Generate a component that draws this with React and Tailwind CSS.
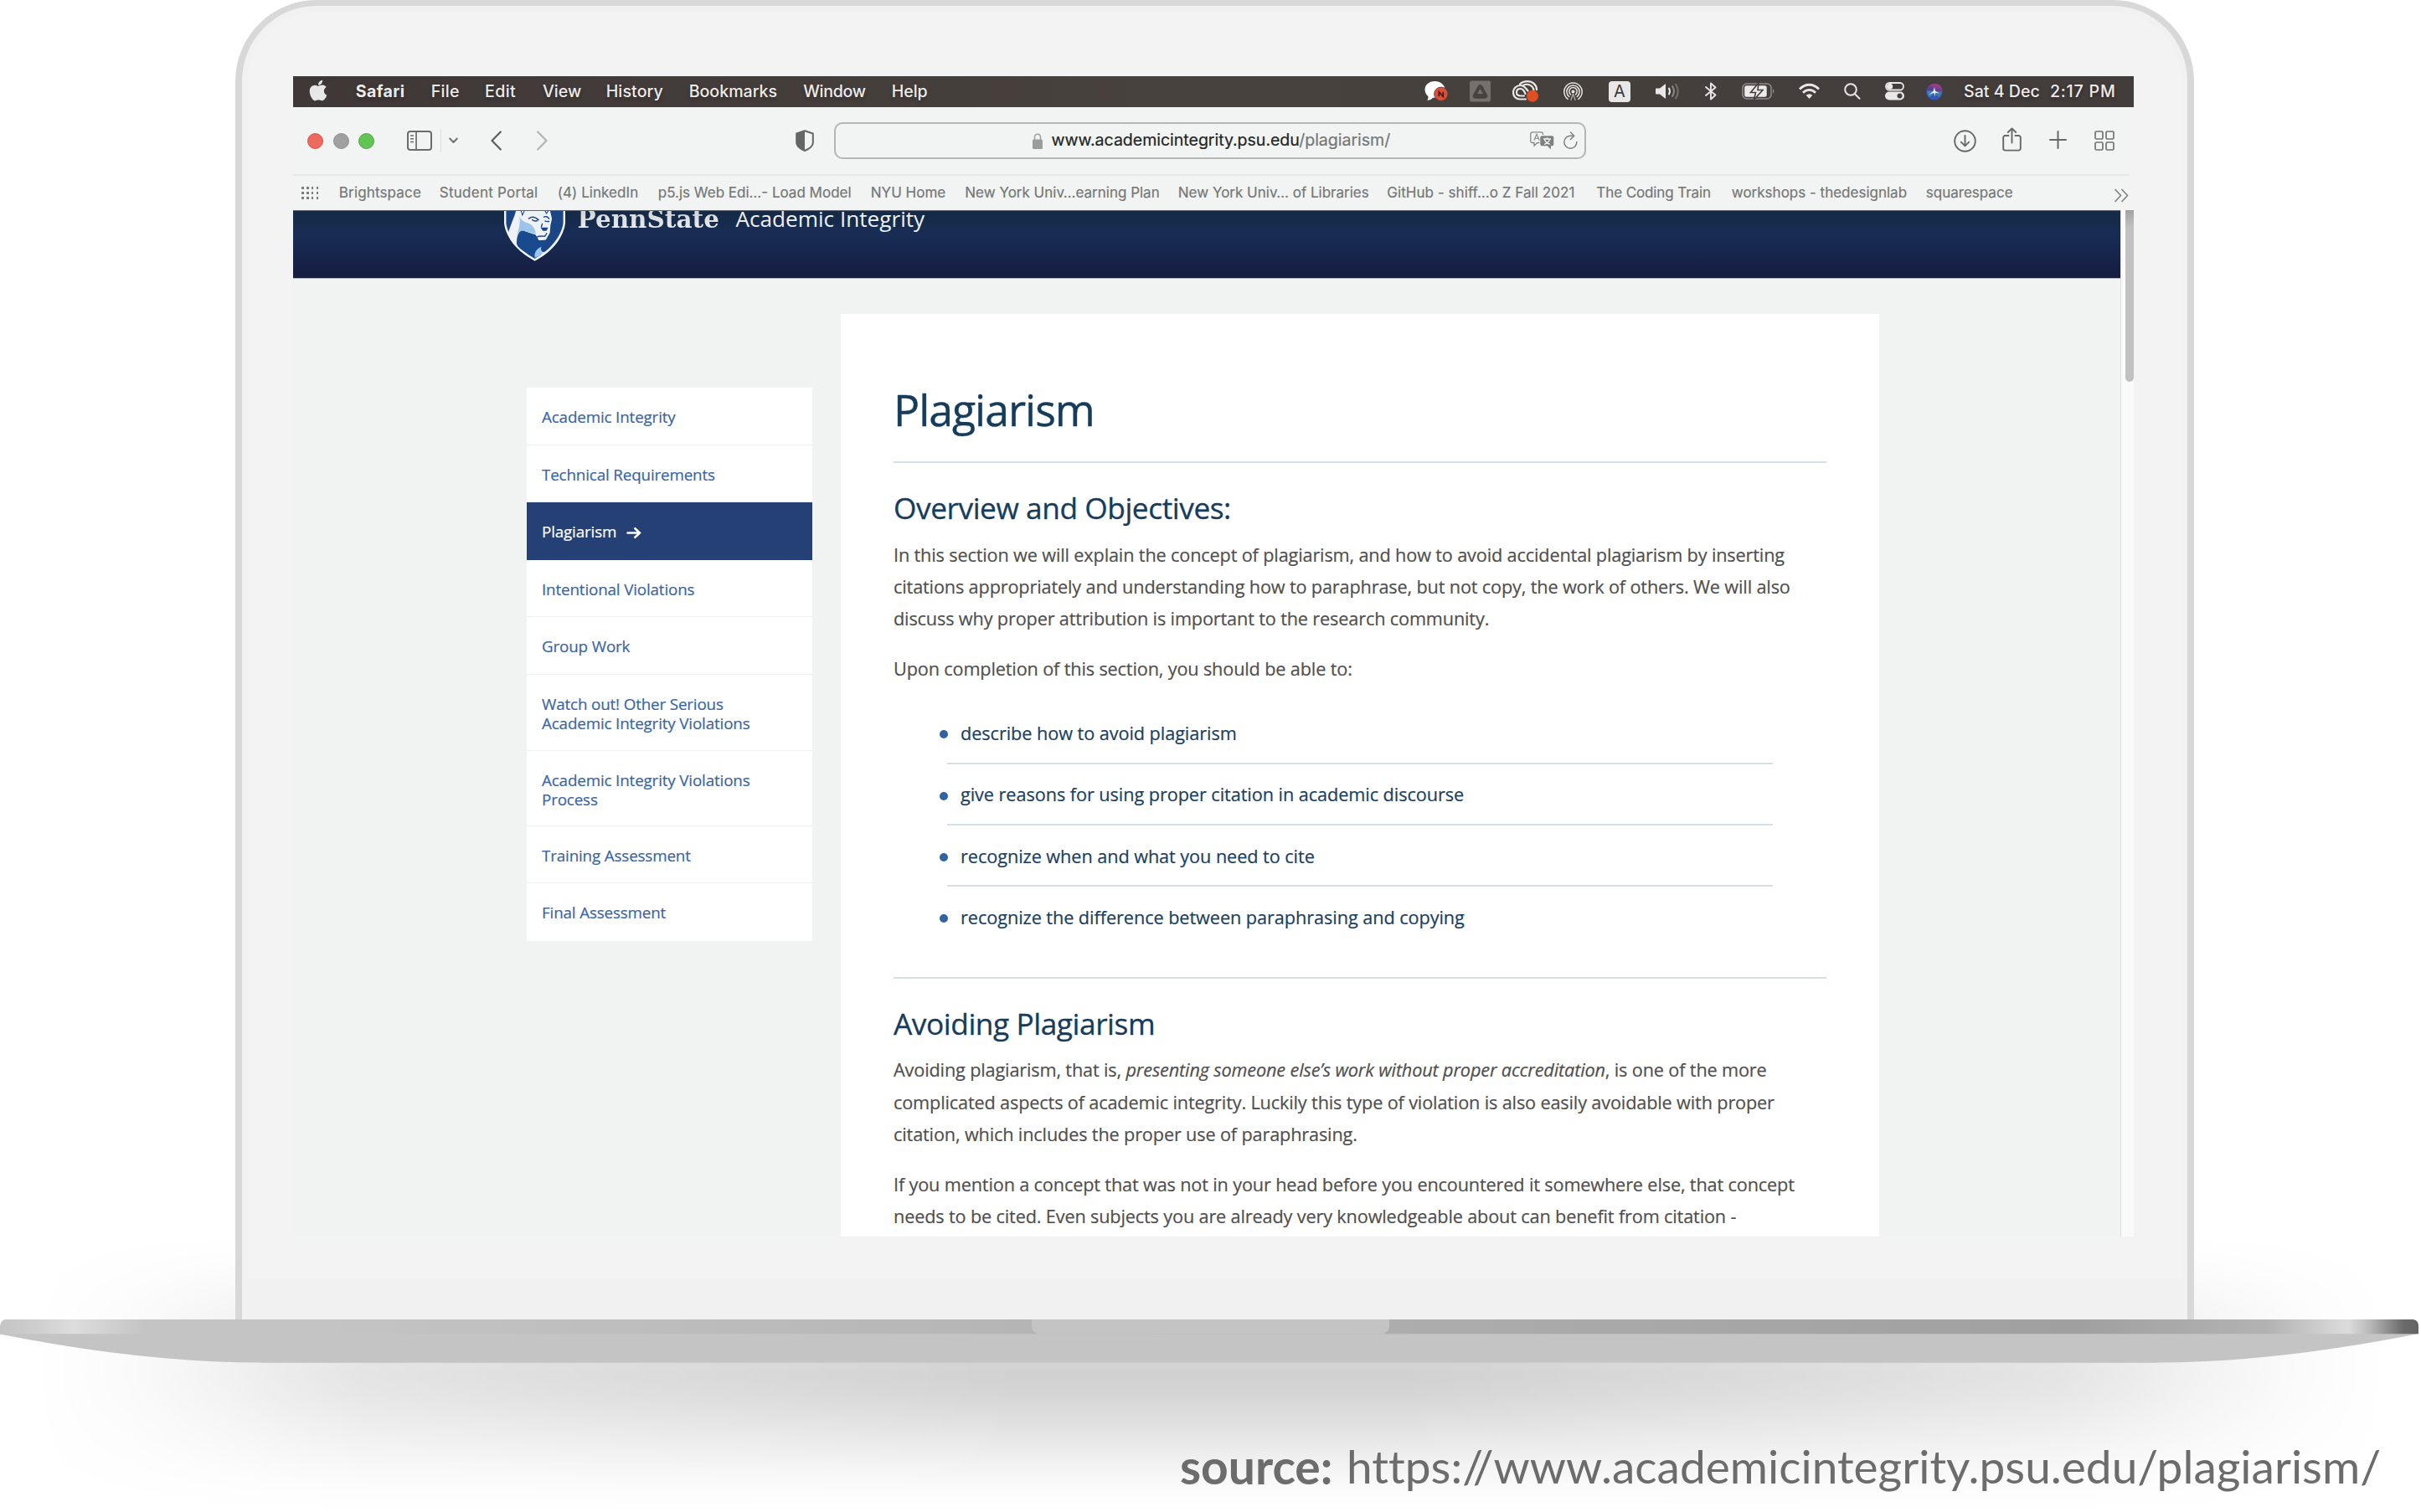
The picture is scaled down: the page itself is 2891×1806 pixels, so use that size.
import React from 'react';
import { FaApple } from 'react-icons/fa';

const MENUS = [
  { label: 'Safari', cls: 'w-[90px] font-bold tracking-[0.4px]' },
  { label: 'File', cls: 'w-[64.3px] tracking-[0.3px]' },
  { label: 'Edit', cls: 'w-[68.9px] tracking-[0.4px]' },
  { label: 'View', cls: 'w-[75.8px]' },
  { label: 'History', cls: 'w-[99px] tracking-[0.1px]' },
  { label: 'Bookmarks', cls: 'w-[136.6px]' },
  { label: 'Window', cls: 'w-[105.6px] tracking-[-0.3px]' },
  { label: 'Help', cls: 'tracking-[-0.1px]' },
];

const BOOKMARKS = [
  { label: 'Brightspace', cls: 'w-[120px] tracking-[0.15px]' },
  { label: 'Student Portal', cls: 'w-[141px] tracking-[0.25px]' },
  { label: '(4) LinkedIn', cls: 'w-[120px] tracking-[0.05px]' },
  { label: 'p5.js Web Edi…- Load Model', cls: 'w-[254px]' },
  { label: 'NYU Home', cls: 'w-[112.5px]' },
  { label: 'New York Univ…earning Plan', cls: 'w-[254.5px]' },
  { label: 'New York Univ… of Libraries', cls: 'w-[249.5px]' },
  { label: 'GitHub - shiff…o Z Fall 2021', cls: 'w-[250px] tracking-[0.05px]' },
  { label: 'The Coding Train', cls: 'w-[161.5px] tracking-[-0.1px]' },
  { label: 'workshops - thedesignlab', cls: 'w-[232px]' },
  { label: 'squarespace', cls: '' },
];

const NAV = [
  { lines: ['Academic Integrity'], h: 'h-[69px]' },
  { lines: ['Technical Requirements'], h: 'h-[68px]' },
  { lines: ['Plagiarism'], h: 'h-[69px]', active: true },
  { lines: ['Intentional Violations'], h: 'h-[68px]' },
  { lines: ['Group Work'], h: 'h-[69px]' },
  { lines: ['Watch out! Other Serious', 'Academic Integrity Violations'], h: 'h-[91px]' },
  { lines: ['Academic Integrity Violations', 'Process'], h: 'h-[90px]' },
  { lines: ['Training Assessment'], h: 'h-[68px]' },
  { lines: ['Final Assessment'], h: 'h-[69px]', last: true },
];

const OBJECTIVES = [
  'describe how to avoid plagiarism',
  'give reasons for using proper citation in academic discourse',
  'recognize when and what you need to cite',
  'recognize the difference between paraphrasing and copying',
];

function ChatIcon() {
  return (
    <svg className="w-[28px] h-[26px] shrink-0" viewBox="0 0 28 26">
      <path d="M12.500 1C5.500 1 .5 5.400.5 11c0 3.600 1.600 6 3.900 8 .2 2-.2 3.500-1 5 3-.3 5.100-1.500 6.600-3.200h2.500c6.500 0 12-4.300 12-9.800S19 1 12.500 1z" fill="#fff" />
      <circle cx="19.800" cy="16.300" r="8.200" fill="#dd4f38" stroke="#463f3d" strokeWidth="0.800" />
      <path d="M17.300 19.300v-5.500l5 5.500v-5.500" fill="none" stroke="#4a1a14" strokeWidth="1.700" />
    </svg>
  );
}

function DriveIcon() {
  return (
    <svg className="w-[25px] h-[26px] shrink-0" viewBox="0 0 25 26">
      <rect x="0" y="0.500" width="25" height="25" rx="2.500" fill="#75706e" />
      <path d="M12.500 8.500l5.500 10h-11z" fill="#48423f" stroke="#48423f" strokeWidth="6.500" strokeLinejoin="round" />
      <path d="M12.500 10l3.400 6h-6.800z" fill="#75706e" />
    </svg>
  );
}

function CloudIcon() {
  return (
    <svg className="w-[31px] h-[26px] shrink-0" viewBox="0 0 31 26" fill="none" stroke="#e9e7e7" strokeWidth="2.200" strokeLinecap="round">
      <path d="M9 4.500C11 2.500 14.500 1.200 18 1.200c6 0 11 4 11 10" />
      <path d="M13 6c5-3 12 0 12.500 6" />
      <path d="M16 22.500H9C4.500 22.500 1 19 1 14.500S4.500 6 9.500 6c3 0 5 1.500 7 4l2 2.500" />
      <path d="M14 18.500H10c-3 0-5-1.500-5-4.300 0-2.700 2-4.200 4.500-4.200 2 0 3.500 1 4.500 3l1.500 3" />
      <circle cx="24" cy="18.800" r="7" fill="#de4f23" stroke="none" />
    </svg>
  );
}

function AirdropIcon() {
  return (
    <svg className="w-[23px] h-[23px] shrink-0" viewBox="0 0 23 23" fill="none" stroke="#e5e2e1" strokeWidth="1.500" strokeLinecap="round">
      <path d="M5.200 20.300a10.700 10.700 0 1 1 12.600 0" />
      <path d="M6.800 17.500a7.600 7.600 0 1 1 9.400 0" />
      <path d="M8.600 15a4.700 4.700 0 1 1 5.800 0" />
      <circle cx="11.500" cy="11.500" r="2" fill="#e5e2e1" stroke="none" />
      <path d="M11.500 14.500l-2.600 7M11.500 14.500l2.600 7" strokeWidth="0.900" />
    </svg>
  );
}

function VolumeIcon() {
  return (
    <svg className="w-[28px] h-[20px] shrink-0" viewBox="0 0 28 20" fill="none" strokeLinecap="round" strokeWidth="2">
      <path d="M1 6.500h4L12 1v18l-7-5.500H1a1 1 0 0 1-1-1v-5a1 1 0 0 1 1-1z" fill="#e9e7e7" />
      <path d="M16 6.500q2 3.500 0 7" stroke="#e9e7e7" />
      <path d="M20 4q4 6 0 12" stroke="#8e8988" />
      <path d="M24 1.500q5.500 8.500 0 17" stroke="#736e6c" />
    </svg>
  );
}

function BluetoothIcon() {
  return (
    <svg className="w-[14px] h-[22px] shrink-0" viewBox="0 0 14 22" fill="none" stroke="#e9e7e7" strokeWidth="1.900" strokeLinejoin="round" strokeLinecap="round">
      <path d="M1 6l11.500 9.500L7 20.500v-19l5.500 5L1 16" />
    </svg>
  );
}

function BatteryIcon() {
  return (
    <svg className="w-[40px] h-[20px] shrink-0" viewBox="0 0 40 20">
      <rect x="1" y="1" width="34" height="18" rx="5" fill="none" stroke="#8f8a88" strokeWidth="1.600" />
      <path d="M37 7q3 3 0 6z" fill="#8f8a88" />
      <rect x="3.200" y="3.200" width="26.500" height="13.600" rx="2.500" fill="#eceaea" />
      <path d="M20 0L10.500 11.500h6L14.500 20 25 8.500h-6z" fill="#eceaea" stroke="#463f3d" strokeWidth="1.600" />
    </svg>
  );
}

function WifiIcon() {
  return (
    <svg className="w-[25px] h-[20px] shrink-0" viewBox="0 0 25 20" fill="none" stroke="#e9e7e7" strokeWidth="2.800">
      <path d="M1 7.500c6.500-7 16.500-7 23 0" />
      <path d="M5 11.800c4.200-4.500 10.800-4.500 15 0" />
      <path d="M12.500 19l-3.800-4.200q3.800-3 7.600 0z" fill="#e9e7e7" stroke="none" />
    </svg>
  );
}

function SearchIcon() {
  return (
    <svg className="w-[20px] h-[20px] shrink-0" viewBox="0 0 20 20" fill="none" stroke="#e9e7e7" strokeWidth="2" strokeLinecap="round">
      <circle cx="8" cy="8" r="6.800" />
      <path d="M13 13.200l5.500 5.500" />
    </svg>
  );
}

function ControlIcon() {
  return (
    <svg className="w-[23px] h-[22px] shrink-0" viewBox="0 0 23 22">
      <rect x="1" y="1" width="21" height="8.500" rx="4.250" fill="none" stroke="#e9e7e7" strokeWidth="1.800" />
      <circle cx="5.600" cy="5.250" r="3.600" fill="#e9e7e7" />
      <rect x="0" y="11.500" width="23" height="10" rx="5" fill="#e9e7e7" />
      <circle cx="17.500" cy="16.500" r="3" fill="#453f3d" />
    </svg>
  );
}

function SiriIcon() {
  return (
    <svg className="w-[20px] h-[21px] shrink-0" viewBox="0 0 20 20">
      <defs>
        <linearGradient id="siri" x1="0.600" y1="0" x2="0.300" y2="1">
          <stop offset="0" stopColor="#b0407e" />
          <stop offset="0.450" stopColor="#4b3f9a" />
          <stop offset="1" stopColor="#2a5fc6" />
        </linearGradient>
      </defs>
      <circle cx="10" cy="10" r="9.800" fill="url(#siri)" />
      <path d="M1 9q6-1 9 1-3 6-6 6Q1 14 1 9z" fill="#3fc0de" opacity="0.450" />
      <path d="M10 10q5-1 9 0-1 5-4 7-4-3-5-7z" fill="#38a0a0" opacity="0.600" />
      <path d="M10 4.500l.8 4.500 5 3-4.800-.8-.8 5-.9-5-5.800 2.300 5-4z" fill="#e4fbff" />
    </svg>
  );
}

function MenuBar() {
  return (
    <div className="flex h-[37px] items-center bg-linear-to-r from-[#3f3837] via-[#48423e] to-[#423c3b] pr-[22px] pb-[1px] pl-[15.700px] text-[19.600px] font-medium leading-[30px] whitespace-nowrap text-[#ecebeb] [text-shadow:0_2px_4px_rgba(0,0,0,0.350)]">
      <FaApple className="-mt-[2px] mr-[31px] h-[28px] w-[28px] shrink-0 text-[#e8e7e7]" />
      {MENUS.map((m) => (
        <span key={m.label} className={`shrink-0 ${m.cls}`}>{m.label}</span>
      ))}
      <div className="ml-auto flex items-center">
        <ChatIcon />
        <span className="w-[26px]" />
        <DriveIcon />
        <span className="w-[26px]" />
        <CloudIcon />
        <span className="w-[30px]" />
        <AirdropIcon />
        <span className="w-[31px]" />
        <span className="flex h-[25px] w-[26px] items-center justify-center rounded-[4px] bg-[#e9e8e8] text-[20px] font-normal text-[#3f3938] [text-shadow:none]">A</span>
        <span className="w-[30px]" />
        <VolumeIcon />
        <span className="w-[31px]" />
        <BluetoothIcon />
        <span className="w-[30px]" />
        <BatteryIcon />
        <span className="w-[28px]" />
        <WifiIcon />
        <span className="w-[29px]" />
        <SearchIcon />
        <span className="w-[29px]" />
        <ControlIcon />
        <span className="w-[26px]" />
        <SiriIcon />
        <span className="ml-[25px] w-[103px]">Sat 4 Dec</span>
        <span className="w-[78px] tracking-[0.800px]">2:17 PM</span>
      </div>
    </div>
  );
}

function Toolbar() {
  return (
    <div className="flex h-[80px] items-center pl-[17px]">
      <div className="flex gap-[11.500px]">
        <span className="h-[19px] w-[19px] rounded-full border border-[#c9584d] bg-[#ec6a5e]" />
        <span className="h-[19px] w-[19px] rounded-full border border-[#8e8e8e] bg-[#a0a0a0]" />
        <span className="h-[19px] w-[19px] rounded-full border border-[#4fa443] bg-[#61c554]" />
      </div>
      <svg className="ml-[39px] h-[24px] w-[30px]" viewBox="0 0 30 24" fill="none" stroke="#6a6d6c">
        <rect x="1" y="1" width="28" height="22" rx="3" strokeWidth="2" />
        <path d="M11 1v22" strokeWidth="1.700" />
        <path d="M4 6h4M4 9.700h4M4 13.400h4" strokeWidth="1.500" />
      </svg>
      <span className="ml-[10px] h-[28px] w-px bg-[#dcdfde]" />
      <svg className="ml-[9px] h-[8px] w-[11px]" viewBox="0 0 11 8" fill="none" stroke="#717473" strokeWidth="2" strokeLinecap="round" strokeLinejoin="round">
        <path d="M1.200 1.500L5.500 6l4.300-4.500" />
      </svg>
      <svg className="ml-[39px] h-[24px] w-[13px]" viewBox="0 0 13 24" fill="none" stroke="#5c5f5e" strokeWidth="2.200" strokeLinecap="round" strokeLinejoin="round">
        <path d="M11.800 1.500L1.500 12l10.300 10.500" />
      </svg>
      <svg className="ml-[42px] h-[24px] w-[13px]" viewBox="0 0 13 24" fill="none" stroke="#b0b3b2" strokeWidth="2.200" strokeLinecap="round" strokeLinejoin="round">
        <path d="M1.200 1.500L11.500 12 1.200 22.500" />
      </svg>
      <svg className="ml-[295.500px] h-[26px] w-[22px]" viewBox="0 0 22 26">
        <path d="M11 1.200L20.800 4.500v11c0 4-5 7.500-9.800 9.500-4.800-2-9.800-5.500-9.800-9.500v-11z" fill="none" stroke="#646766" strokeWidth="2" strokeLinejoin="round" />
        <path d="M11 1.200v23.800c-4.800-2-9.800-5.500-9.800-9.500v-11z" fill="#646766" />
      </svg>
      <div className="ml-[24.500px] flex h-[44px] w-[898px] items-center rounded-[10px] border-2 border-[#b3b6b5] pr-[8px] pl-[235px]">
        <svg className="h-[19px] w-[12px]" viewBox="0 0 12 19">
          <rect x="0" y="7.500" width="12" height="11.500" rx="1.500" fill="#9a9d9c" />
          <path d="M2.500 8V4.800a3.500 3.500 0 0 1 7 0V8" fill="none" stroke="#9a9d9c" strokeWidth="1.500" />
        </svg>
        <span className="mb-[1px] ml-[10.500px] text-[19.600px] tracking-[-0.050px] whitespace-nowrap text-[#232524] [-webkit-text-stroke:0.200px]">
          www.academicintegrity.psu.edu<span className="text-[#747776]">/plagiarism/</span>
        </span>
        <svg className="ml-auto h-[22px] w-[29px]" viewBox="0 0 29 22" fill="none" stroke="#858887">
          <path d="M15.500 4V3a2.200 2.200 0 0 0-2.200-2.200H3A2.200 2.200 0 0 0 .8 3v8.300a2.200 2.200 0 0 0 2.200 2.200h2v3.500l4-3.500h2.500" strokeWidth="1.300" />
          <path d="M4.800 10.800L8 3.200l3.200 7.600M6 8.300h4" strokeWidth="1.100" />
          <path d="M14.300 5.300h12a2 2 0 0 1 2 2v8a2 2 0 0 1-2 2H25V21.500l-4.300-4.200h-6.400a2 2 0 0 1-2-2v-8a2 2 0 0 1 2-2z" fill="#7e8180" stroke="none" />
          <path d="M16 9h9M20.500 7v2M17.300 9.200q1.500 4.500 6.500 6.200M23.700 9.200q-1.500 4.500-6.500 6.200" stroke="#f1f4f3" strokeWidth="1.300" />
        </svg>
        <svg className="ml-[11px] h-[22px] w-[17px]" viewBox="0 0 17 22" fill="none" stroke="#7e8180" strokeWidth="1.500" strokeLinecap="round" strokeLinejoin="round">
          <path d="M15.800 12.500a7.500 7.500 0 1 1-7.300-7.300h3M8.500 1l4.200 4.200-4.200 4.200" />
        </svg>
      </div>
      <svg className="ml-[439px] h-[27px] w-[27px]" viewBox="0 0 27 27" fill="none" stroke="#656867" strokeWidth="1.900" strokeLinecap="round" strokeLinejoin="round">
        <circle cx="13.500" cy="13.500" r="12.300" />
        <path d="M13.500 7v12M8.800 14.600l4.700 4.700 4.700-4.700" />
      </svg>
      <svg className="-mt-[4px] ml-[31px] h-[29px] w-[23px]" viewBox="0 0 23 29" fill="none" stroke="#656867" strokeWidth="1.900" strokeLinecap="round" strokeLinejoin="round">
        <path d="M7.500 10H3.500A2.300 2.300 0 0 0 1.200 12.300v13A2.300 2.300 0 0 0 3.500 27.600h16a2.300 2.300 0 0 0 2.300-2.300v-13A2.300 2.300 0 0 0 19.500 10h-4" />
        <path d="M11.500 18.500V1.500M6.800 6l4.700-4.700L16.200 6" />
      </svg>
      <svg className="-mt-[2px] ml-[33px] h-[22px] w-[21px]" viewBox="0 0 21 22" fill="none" stroke="#656867" strokeWidth="2" strokeLinecap="round">
        <path d="M10.500 1v20M1 11h19" />
      </svg>
      <svg className="ml-[33px] h-[24px] w-[24px]" viewBox="0 0 24 24" fill="none" stroke="#707372" strokeWidth="1.700">
        <rect x="1" y="1" width="9" height="9" rx="1.500" />
        <rect x="14" y="1" width="9" height="9" rx="1.500" />
        <rect x="1" y="14" width="9" height="9" rx="1.500" />
        <rect x="14" y="14" width="9" height="9" rx="1.500" />
      </svg>
    </div>
  );
}

function BookmarksBar() {
  return (
    <div className="flex h-[41px] items-center pl-[10px] text-[17px] whitespace-nowrap text-[#747776] [-webkit-text-stroke:0.200px]">
      <div className="mr-[24.500px] grid shrink-0 grid-cols-4 gap-x-[3.200px] gap-y-[3px]">
        {Array.from({ length: 12 }, (_, i) => (
          <span key={i} className="h-[3px] w-[2.700px] bg-[#7b7e7d]" />
        ))}
      </div>
      {BOOKMARKS.map((b) => (
        <span key={b.label} className={`shrink-0 ${b.cls}`}>{b.label}</span>
      ))}
      <svg className="mt-[5px] mr-[6px] ml-auto h-[17px] w-[18px]" viewBox="0 0 18 17" fill="none" stroke="#7b7e7d" strokeWidth="1.500">
        <path d="M1.500 1l7 7.500-7 7.500M9.500 1l7 7.500-7 7.500" />
      </svg>
    </div>
  );
}

function ShieldLogo() {
  return (
    <svg className="h-[60px] w-[73px] shrink-0" viewBox="64 33 211 182" preserveAspectRatio="none">
      <path d="M64 20V78C70 130 110 182 170 214 230 182 268 130 275 78V20z" fill="#f2f5f9" />
      <path d="M71 20V78C77 125 114 173 170 206 225 173 261 125 268 78V20z" fill="#1b4585" />
      <path d="M108 20H220L229 62 224 84 222 112 208 138 184 140 172 119 150 112 125 102Q104 116 108 158L96 146Q88 136 78 112 92 70 100 50z" fill="#eef2f7" />
      <path d="M110 130q3-14 12-24l28 7 22 8 6 18 30 2-6 22-10 0-22 24v14Q126 180 110 160z" fill="#184a8d" />
      <path d="M117 52Q120 66 138 74 160 80 168 96L174 116 150 110 128 104Q112 108 106 122 122 90 117 52z" fill="#9dc4ea" />
      <path d="M122 30l5 18 8-18M205 32l5 10 8-12" stroke="#1b4585" strokeWidth="3" fill="none" />
      <path d="M148 62Q162 46 184 66M160 64q8 8 20 4M200 56q10-8 20 6M204 69q8 4 16 1" stroke="#1b4585" strokeWidth="4.500" fill="none" />
      <path d="M190 93h26l-6 12h-12z" fill="#1b4585" />
      <path d="M174 128q16-6 30-3l8-12M196 78l-4 14" stroke="#1b4585" strokeWidth="4" fill="none" />
      <path d="M170 203Q164 176 193 162 187 178 200 182L190 194z" fill="#9dc4ea" />
      <path d="M196 184l10-4-14 14z" fill="#f2f5f9" />
    </svg>
  );
}

function SiteHeader() {
  return (
    <div className="flex h-[82px] items-start overflow-hidden border-t border-b border-t-[#5b6870] border-b-[#b6bacb] bg-linear-to-b from-[#152a45] via-[#172d55] via-35% to-[#151c3f] pl-[252px]">
      <ShieldLogo />
      <span className="-mt-[10px] ml-[14.500px] w-[189px] bg-linear-to-b from-[#c9cbce] to-[#f3f4f6] bg-clip-text font-['DejaVu_Serif'] text-[29.500px] leading-[40px] font-bold text-transparent">PennState</span>
      <span className="-mt-[11.500px] font-['Open_Sans'] text-[26.160px] leading-[40px] text-[#eef0f3]">Academic Integrity</span>
    </div>
  );
}

function SideNav() {
  return (
    <nav className="mt-[130px] ml-[279px] w-[341px] shrink-0 self-start bg-white text-[18.800px] leading-[23.300px] tracking-[-0.140px] text-[#3a66a1] [-webkit-text-stroke:0.200px]">
      {NAV.map((n, i) => (
        <div
          key={i}
          className={`${n.h} flex pt-[24px] pl-[18px] ${n.active ? 'bg-[#244074] text-white' : ''} ${n.last || n.active ? '' : 'border-b border-[#eef0f0]'}`}
        >
          <div>
            {n.lines.map((l) => (
              <div key={l}>{l}</div>
            ))}
          </div>
          {n.active && (
            <svg className="mt-[5px] ml-[12px] h-[15px] w-[18px]" viewBox="0 0 18 15" fill="none" stroke="#fff" strokeWidth="2.400">
              <path d="M0.500 7.500h15M9.500 1.500l6.500 6-6.500 6" />
            </svg>
          )}
        </div>
      ))}
    </nav>
  );
}

function Article() {
  return (
    <article className="mt-[42px] ml-[34px] h-[1102px] w-[1240px] shrink-0 overflow-hidden bg-white px-[63px] pt-[84px] text-[21.700px] leading-[38.400px] tracking-[-0.155px] whitespace-nowrap text-[#4f4f4f] [-webkit-text-stroke:0.200px]">
      <h1 className="text-[51.900px] leading-[60px] tracking-[-1.050px] text-[#163c5b] [-webkit-text-stroke:0.400px]">Plagiarism</h1>
      <hr className="mt-[32px] border-t-2 border-[#d8dfe4]" />
      <h2 className="mt-[29.700px] text-[35.300px] leading-[46px] tracking-[-0.460px] text-[#163c5b] [-webkit-text-stroke:0.300px]">Overview and Objectives:</h2>
      <p className="mt-[14.900px]">
        In this section we will explain the concept of plagiarism, and how to avoid accidental plagiarism by inserting<br />
        citations appropriately and understanding how to paraphrase, but not copy, the work of others. We will also<br />
        discuss why proper attribution is important to the research community.
      </p>
      <p className="mt-[21.500px]">Upon completion of this section, you should be able to:</p>
      <ul className="mx-[64px] mt-[20.900px]">
        {OBJECTIVES.map((o, i) => (
          <li key={o} className={`relative h-[73.250px] pt-[17.500px] pl-[16px] text-[21.700px] tracking-[-0.070px] text-[#1a4060] ${i < OBJECTIVES.length - 1 ? 'border-b-2 border-[#d8dfe4]' : ''}`}>
            <span className="absolute top-[32.800px] -left-[9.500px] h-[10px] w-[10px] rounded-full bg-[#3163a0]" />
            {o}
          </li>
        ))}
      </ul>
      <hr className="mt-[34px] border-t-2 border-[#d3dde6]" />
      <h2 className="mt-[30px] text-[35.300px] leading-[46px] tracking-[-0.460px] text-[#163c5b] [-webkit-text-stroke:0.300px]">Avoiding Plagiarism</h2>
      <p className="mt-[14.700px]">
        Avoiding plagiarism, that is, <em>presenting someone else’s work without proper accreditation</em>, is one of the more<br />
        complicated aspects of academic integrity. Luckily this type of violation is also easily avoidable with proper<br />
        citation, which includes the proper use of paraphrasing.
      </p>
      <p className="mt-[21.500px]">
        If you mention a concept that was not in your head before you encountered it somewhere else, that concept<br />
        needs to be cited. Even subjects you are already very knowledgeable about can benefit from citation -
      </p>
    </article>
  );
}

function Screen() {
  return (
    <div className="h-[1386px] w-[2198px] overflow-hidden bg-[#f1f4f3] font-['Inter']">
      <MenuBar />
      <Toolbar />
      <div className="mr-[5px] h-[2px] bg-[#e5e8e7]" />
      <BookmarksBar />
      <div className="flex h-[1226px]">
        <div className="w-[2182px] bg-[#f0f3f2]">
          <SiteHeader />
          <div className="flex font-['Open_Sans']">
            <SideNav />
            <Article />
          </div>
        </div>
        <div className="flex w-[16px] justify-end border-l border-[#dddfde] bg-[#fafafa]">
          <span className="h-[205px] w-[10px] rounded-b-[5px] bg-linear-to-b from-[#a2a2a2] via-[#c1c1c1] via-10% to-[#c1c1c1]" />
        </div>
      </div>
    </div>
  );
}

function LaptopBase() {
  return (
    <svg className="relative block h-[52px] w-[2891px]" viewBox="0 0 2891 52">
      <defs>
        <linearGradient id="edge" gradientUnits="userSpaceOnUse" x1="0" y1="0" x2="2888" y2="0">
          <stop offset="0" stopColor="#c5c5c5" />
          <stop offset="0.014" stopColor="#cdcdcd" />
          <stop offset="0.030" stopColor="#dddddd" />
          <stop offset="0.060" stopColor="#c4c4c4" />
          <stop offset="0.150" stopColor="#c3c3c3" />
          <stop offset="0.427" stopColor="#b5b5b5" />
          <stop offset="0.576" stopColor="#adadad" />
          <stop offset="0.860" stopColor="#a0a0a0" />
          <stop offset="0.938" stopColor="#b3b3b3" />
          <stop offset="0.971" stopColor="#dcdcdc" />
          <stop offset="0.980" stopColor="#b8b8b8" />
          <stop offset="0.994" stopColor="#6a6a6a" />
          <stop offset="1" stopColor="#646464" />
        </linearGradient>
      </defs>
      <path d="M0 17H2888Q2715 51.500 2576 51.500H312Q170 51.500 0 17.500z" fill="#c4c4c4" />
      <path d="M6 0H2882Q2888 1 2888 8V17.300H0V8Q1 1 6 0z" fill="url(#edge)" />
      <path d="M1232 0V8q0 8 9 9.300h409q9-1.300 9-9.300V0z" fill="#c4c4c4" />
      <path d="M312 51.500H2576" stroke="#cdcdcd" strokeWidth="1" />
    </svg>
  );
}

export default function App() {
  return (
    <div className="relative h-[1806px] w-[2891px] overflow-hidden bg-white">
      <div className="absolute top-[1476px] left-[40px] h-[330px] w-[2810px] bg-[linear-gradient(to_bottom,rgba(0,0,0,0)_0px,rgba(0,0,0,0.040)_34px,rgba(0,0,0,0.090)_64px,rgba(0,0,0,0.140)_94px,rgba(0,0,0,0.168)_124px,rgba(0,0,0,0.180)_168px,rgba(0,0,0,0.165)_190px,rgba(0,0,0,0.118)_226px,rgba(0,0,0,0.075)_256px,rgba(0,0,0,0.035)_284px,rgba(0,0,0,0.010)_308px,rgba(0,0,0,0)_330px)] [mask-image:linear-gradient(to_right,transparent_0%,rgba(0,0,0,0.100)_4%,rgba(0,0,0,0.280)_8%,rgba(0,0,0,0.420)_10.500%,rgba(0,0,0,0.580)_14%,rgba(0,0,0,0.740)_24%,#000_42%,#000_58%,rgba(0,0,0,0.740)_76%,rgba(0,0,0,0.580)_86%,rgba(0,0,0,0.420)_89.500%,rgba(0,0,0,0.280)_92%,rgba(0,0,0,0.100)_96%,transparent_100%)]" />
      <div className="relative ml-[281px] h-[1576px] w-[2339px] rounded-t-[97px] border-x-8 border-t-[7px] border-[#d8d8d8] bg-[#f1f1f1] px-[6px] pt-[7px]">
        <div className="h-[1513.500px] rounded-t-[84px] bg-[#f3f3f3] pt-[77px] pl-[55px]">
          <Screen />
        </div>
      </div>
      <LaptopBase />
      <div className="relative mt-[90px] flex pl-[1409px] font-['Lato'] text-[55px] leading-[66px] whitespace-nowrap text-[#6c6c6c] [font-variant-ligatures:none]">
        <span className="w-[199px] text-[57px] font-bold">source:</span>
        <span>https://www.academicintegrity.psu.edu/plagiarism/</span>
      </div>
    </div>
  );
}
